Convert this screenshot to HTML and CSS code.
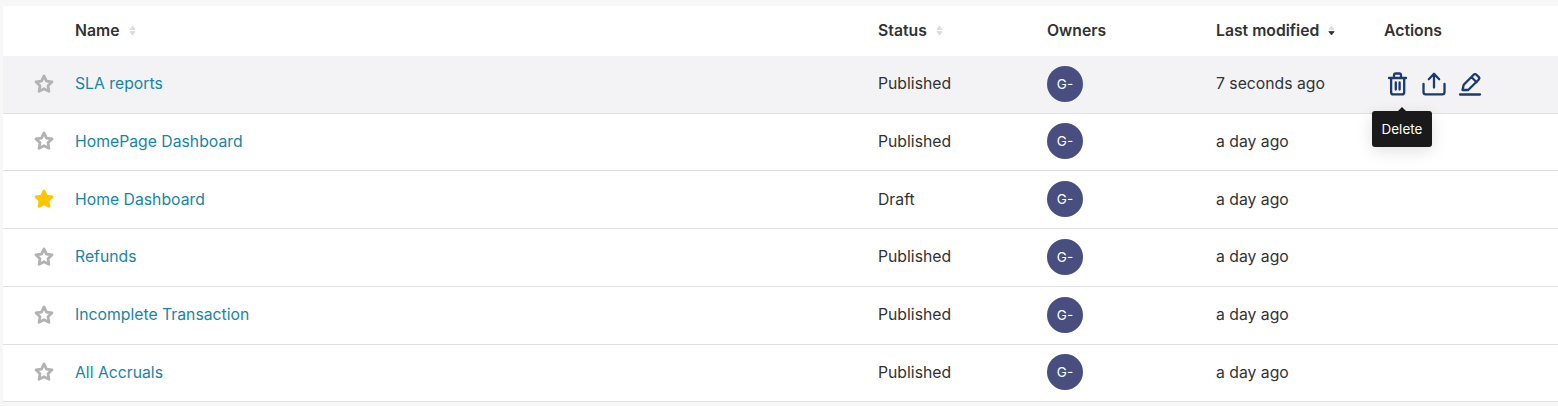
FILE: index.html
```html
<!DOCTYPE html>
<html lang="en">
<head>
<meta charset="utf-8">
<title>Dashboards</title>
<link rel="stylesheet" href="styles.css">
</head>
<body>
<svg class="defs" width="0" height="0" aria-hidden="true">
  <defs>
    <path id="star" d="M12 3.2l2.7 5.6 6.1.85-4.45 4.3 1.07 6.1L12 17.15 6.58 20.05l1.07-6.1L3.2 9.65l6.1-.85z"/>
    <g id="sorter"><path d="M3.5 1L6.2 4.4H0.8z" class="up"/><path d="M3.5 10L0.8 6.6H6.2z" class="down"/></g>
  </defs>
</svg>
<main class="list">
  <div class="row head">
    <div></div>
    <div class="th">Name <svg class="sort" viewBox="0 0 7 11"><use href="#sorter"/></svg></div>
    <div class="th">Status <svg class="sort" viewBox="0 0 7 11"><use href="#sorter"/></svg></div>
    <div class="th">Owners</div>
    <div class="th">Last modified <svg class="sort" viewBox="0 0 7 11"><path d="M3.5 1L6.2 4.4H0.8z"/><path class="dark" d="M3.5 10L0.8 6.6H6.2z"/></svg></div>
    <div class="th">Actions</div>
  </div>

  <div class="row item hover">
    <div class="fav"><svg class="star" viewBox="0 0 24 24"><use href="#star"/></svg></div>
    <a class="name">SLA reports</a>
    <div>Published</div>
    <div><span class="avatar">G-</span></div>
    <div>7 seconds ago</div>
    <div class="actions">
      <span class="act">
        <svg viewBox="0 0 24 24"><path d="M3 6h17M8 6V3.4c0-1 .8-1.9 1.8-1.9h3.4c1 0 1.8.9 1.8 1.9V6M5.1 6v14.2c0 1.2 1 2.2 2.2 2.2h8.7c1.2 0 2.2-1 2.2-2.2V6M9.8 10.5v7M13.6 10.5v7"/></svg>
        <span class="tip">Delete</span>
      </span>
      <span class="act"><svg viewBox="0 0 24 24"><path d="M12 15.5V2M6.8 7.2L12 1.8l5.2 5.4M1.5 12v8c0 1.3 1 2.4 2.3 2.4h16.4c1.3 0 2.3-1.1 2.3-2.4v-8"/></svg></span>
      <span class="act"><svg viewBox="0 0 24 24"><path d="M2 22.5h20M4.5 18l1.2-5.2L15.6 2.7c.8-.8 2-.8 2.8 0l2.2 2.2c.8.8.8 2 0 2.8L10.2 18zM13.4 5l5.2 5.2"/></svg></span>
    </div>
  </div>

  <div class="row item">
    <div class="fav"><svg class="star" viewBox="0 0 24 24"><use href="#star"/></svg></div>
    <a class="name">HomePage Dashboard</a>
    <div>Published</div>
    <div><span class="avatar">G-</span></div>
    <div>a day ago</div>
    <div></div>
  </div>
  <div class="row item">
    <div class="fav"><svg class="star on" viewBox="0 0 24 24"><use href="#star"/></svg></div>
    <a class="name">Home Dashboard</a>
    <div>Draft</div>
    <div><span class="avatar">G-</span></div>
    <div>a day ago</div>
    <div></div>
  </div>
  <div class="row item">
    <div class="fav"><svg class="star" viewBox="0 0 24 24"><use href="#star"/></svg></div>
    <a class="name">Refunds</a>
    <div>Published</div>
    <div><span class="avatar">G-</span></div>
    <div>a day ago</div>
    <div></div>
  </div>
  <div class="row item">
    <div class="fav"><svg class="star" viewBox="0 0 24 24"><use href="#star"/></svg></div>
    <a class="name">Incomplete Transaction</a>
    <div>Published</div>
    <div><span class="avatar">G-</span></div>
    <div>a day ago</div>
    <div></div>
  </div>
  <div class="row item">
    <div class="fav"><svg class="star" viewBox="0 0 24 24"><use href="#star"/></svg></div>
    <a class="name">All Accruals</a>
    <div>Published</div>
    <div><span class="avatar">G-</span></div>
    <div>a day ago</div>
    <div></div>
  </div>
</main>
</body>
</html>
```

FILE: styles.css
```css
* { box-sizing: border-box; }
html, body { height: 100%; }
body {
  margin: 0;
  padding: 6px 0 0 3px;
  background: #f7f7f7;
  font-family: Inter, "Liberation Sans", sans-serif;
  font-size: 15.75px;
  color: #323232;
  overflow: hidden;
}
.defs { position: absolute; }
.list { background: #fff; }
.row {
  display: grid;
  grid-template-columns: 72px 803px 169px 169px 168px 1fr;
  align-items: center;
}
.head { height: 49.75px; padding-bottom: 1px; font-weight: 600; }
.th { display: flex; align-items: center; gap: 9px; }
.item { height: 57.75px; padding-bottom: 1px; border-bottom: 1px solid #e0e0e0; }
.item.hover { background: #f3f3f6; }
.fav { display: flex; padding: 0 0 0 29.5px; }
.star { width: 22px; height: 22px; fill: none; stroke: #b2b2b2; stroke-width: 3; stroke-linejoin: round; }
.star.on { fill: #fcc700; stroke: #fcc700; }
.name { color: #1985a0; }
.avatar {
  display: flex; width: 36px; height: 36px;
  align-items: center; justify-content: center;
  border-radius: 50%;
  background: #484e80; color: #fff; font-size: 13.5px;
}
.sort { width: 7px; height: 11px; fill: #dcdcdc; stroke: #dcdcdc; stroke-width: .8; stroke-linejoin: round; margin-top: 1px; }
.sort .dark { fill: #323232; stroke: #323232; }
.actions { display: flex; gap: 12px; padding: 1px 0 0 2px; }
.act { position: relative; display: flex; }
.act svg { width: 24px; height: 24px; fill: none; stroke: #1a3b6e; stroke-width: 2.3; stroke-linecap: round; stroke-linejoin: round; }
.tip {
  position: absolute; top: 39px; left: -14px;
  padding: 0 9.5px 1px; height: 36px;
  display: flex; align-items: center;
  background: #1a1a1a; color: #fff;
  border-radius: 3px; font-size: 13.5px;
  box-shadow: 0 4px 16px rgba(0,0,0,.12);
}
.tip::before {
  content: ""; position: absolute; top: -4px; left: 50%; margin-left: -4px;
  border: 4px solid transparent; border-top: 0; border-bottom-color: #1a1a1a;
}
```
